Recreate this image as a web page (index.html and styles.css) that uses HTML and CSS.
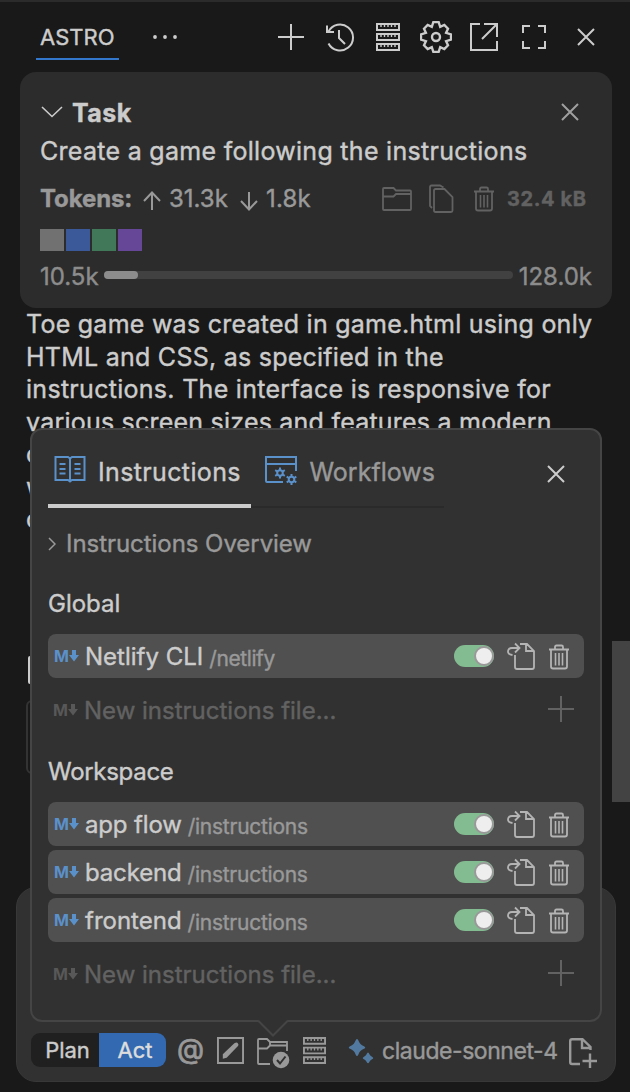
FILE: index.html
```html
<!DOCTYPE html>
<html lang="en">
<head>
<meta charset="utf-8">
<title>Astro</title>
<link rel="stylesheet" href="styles.css">
</head>
<body>
<svg class="sprite" aria-hidden="true">
  <symbol id="plus" viewBox="0 0 26 26"><path d="M13 0V26M0 13H26"/></symbol>
  <symbol id="close" viewBox="0 0 18 18"><path d="M1 1L17 17M17 1L1 17"/></symbol>
  <symbol id="server" viewBox="0 0 24 28"><path d="M1 1H23V7H1ZM1 11H23V17H1ZM1 21H23V27H1Z"/><path stroke-width="1.4" d="M5 1V4M8.500 1V4M12 1V4M15.500 1V4M19 1V4M5 11V14M8.500 11V14M12 11V14M15.500 11V14M19 11V14M5 21V24M8.500 21V24M12 21V24M15.500 21V24M19 21V24"/></symbol>
  <symbol id="trash" viewBox="0 0 22 26"><path stroke-width="1.800" d="M1 5.500H21M3 6V22.500Q3 24.500 5 24.500H17Q19 24.500 19 22.500V6M7 5.500V3Q7 1.500 8.500 1.500H13.500Q15 1.500 15 3V5.500"/><path stroke-width="1.600" d="M7.500 9V21.500M11 9V21.500M14.500 9V21.500"/></symbol>
  <symbol id="open-file" viewBox="0 0 28 28"><path stroke-width="1.800" d="M13 2H20L27 9V25Q27 27 25 27H10Q8 27 8 25V13M19 2V9H27M8 1.500L12.500 6L8 10.500M12 6H5Q1 6 1 9.500Q1 12.500 5.500 13"/></symbol>
  <symbol id="arrow" viewBox="0 0 10 12"><path class="solid" d="M3 0H7V5H10L5 11.500L0 5H3Z"/></symbol>
</svg>

<main class="panel">
  <header class="header">
    <div class="tab-title">ASTRO</div>
    <svg class="dots" viewBox="0 0 26 4"><circle cx="3" cy="2" r="1.900"/><circle cx="13" cy="2" r="1.900"/><circle cx="23" cy="2" r="1.900"/></svg>
    <nav class="actions">
      <svg class="icon i26"><use href="#plus"/></svg>
      <svg class="icon i32" viewBox="0 0 32 32"><path d="M4.500 22.500A13 13 0 1 0 4.500 10.500M3 4.500V11H10M15 9V17L21 23"/></svg>
      <svg class="icon server"><use href="#server"/></svg>
      <svg class="icon i32 gear" viewBox="-16 -16 32 32"><path d="M-2.600-15L2.600-15L4.200-10.100L8.300-12L12-8.300L10.100-4.200L15-2.600L15 2.600L10.100 4.200L12 8.300L8.300 12L4.200 10.100L2.600 15L-2.600 15L-4.200 10.100L-8.300 12L-12 8.300L-10.100 4.200L-15 2.600L-15-2.600L-10.100-4.200L-12-8.300L-8.300-12L-4.200-10.100Z"/><circle r="4"/></svg>
      <svg class="icon i28" viewBox="0 0 28 28"><path d="M10 1H1V27H27V18M14 1H27V14M27 1L12 16"/></svg>
      <svg class="icon full" viewBox="0 0 24 24"><path d="M1 8V1H8M16 1H23V8M23 16V23H16M8 23H1V16"/></svg>
      <svg class="icon i18"><use href="#close"/></svg>
    </nav>
  </header>

  <section class="task">
    <div class="task-head">
      <svg class="icon chev" viewBox="0 0 22 12"><path d="M1 1L11 10.500L21 1"/></svg>
      <h1 class="task-title">Task</h1>
      <svg class="icon i18 task-close"><use href="#close"/></svg>
    </div>
    <p class="task-text">Create a game following the instructions</p>
    <div class="tokens">
      <b class="tokens-label">Tokens:</b>
      <svg class="icon tok-arrow" viewBox="0 0 18 20"><path d="M9 19V2M1 10L9 1.500L17 10"/></svg>
      <span class="tok-up">31.3k</span>
      <svg class="icon tok-arrow down" viewBox="0 0 18 20"><path d="M9 1V18M1 10L9 18.500L17 10"/></svg>
      <span class="tok-down">1.8k</span>
      <div class="file-tools">
        <svg class="icon folder" viewBox="0 0 30 26"><path stroke-width="1.800" d="M2 2H11.500L14 4.500H28Q29 4.500 29 5.500V23Q29 24 28 24H2Q1 24 1 23V3Q1 2 2 2ZM1 10.500H11.500L14 8H29"/></svg>
        <svg class="icon copy" viewBox="0 0 26 30"><path stroke-width="1.800" d="M6 6.500Q6 5 7.500 5H16.500L24.500 13V26.500Q24.500 28 23 28H7.500Q6 28 6 26.500ZM4 24L2 22V3Q2 1.500 3.500 1.500H12L15.500 3.500"/></svg>
        <svg class="icon trash"><use href="#trash"/></svg>
        <b class="size">32.4 kB</b>
      </div>
    </div>
    <div class="swatches"><i class="sw gray"></i><i class="sw blue"></i><i class="sw green"></i><i class="sw violet"></i></div>
    <div class="usage">
      <span class="used">10.5k</span>
      <div class="bar"><div class="fill"></div></div>
      <span class="total">128.0k</span>
    </div>
  </section>

  <section class="chat">
    <p class="line l1">Toe game was created in game.html using only</p>
    <p class="line l2">HTML and CSS, as specified in the</p>
    <p class="line l3">instructions. The interface is responsive for</p>
    <p class="line l4">various screen sizes and features a modern</p>
    <p class="line">c</p>
    <p class="line">w</p>
    <p class="line">c</p>
    <div class="mark"></div>
    <div class="block"></div>
  </section>

  <footer class="composer">
    <div class="modes"><span class="plan">Plan</span><span class="act">Act</span></div>
    <span class="at">@</span>
    <svg class="icon edit" viewBox="0 0 28 28"><path d="M1 1H27V27H1Z"/><path class="solid" d="M6 18L18 6.500Q21.500 4.500 22 7.500V9L10 21.500L6 22.500Z"/></svg>
    <svg class="icon rules" viewBox="0 0 34 32"><path stroke-width="1.800" d="M14 27H3Q2 27 2 26V3Q2 2 3 2H11L14 5H31V14M2 11.500H11L14 8.500H31M14 5V8.500"/><circle class="solid" cx="25" cy="23" r="8.300"/><path class="tick" d="M21 23L24 26.500L29.500 19.500"/></svg>
    <svg class="icon server small"><use href="#server"/></svg>
    <svg class="sparkle" viewBox="0 0 26 26"><path d="M9 1Q10 1 10.400 2.500Q11.700 6.500 16 8.200Q18.500 9.500 16 10.800Q11.700 12.500 10.400 16.500Q9 19.500 7.600 16.500Q6.300 12.500 2 10.800Q-0.500 9.500 2 8.200Q6.300 6.500 7.600 2.500Q8 1 9 1ZM20 14.500Q20.900 14.500 21.300 16Q22 17.800 24 18.700Q26.500 20 24 21.300Q22 22.200 21.300 24Q20 26.500 18.700 24Q18 22.200 16 21.300Q13.500 20 16 18.700Q18 17.800 18.700 16Q19.100 14.500 20 14.500Z"/></svg>
    <span class="model">claude-sonnet-4</span>
    <svg class="icon add-file" viewBox="0 0 28 31"><path stroke-width="2.400" d="M11 26H3Q1.200 26 1.200 24V3Q1.200 1.200 3 1.200H13.500L21.500 9V12M13 1.500V10H22M21 15.500V30M13.500 23H28"/></svg>
  </footer>

  <div class="scrollbar"></div>

  <section class="popover">
    <div class="tabs">
      <div class="tab active">
        <svg class="icon book" viewBox="0 0 32 28"><path d="M16 3.500L14 2H1.500V25H14L16 26.500L18 25H30.500V2H18ZM16 3.500V26.500M5.500 9H11.500M5.500 14H11.500M5.500 18.500H11.500M20.500 9H26.500M20.500 14H26.500M20.500 18.500H26.500"/></svg>
        <span class="tab-a">Instructions</span>
      </div>
      <div class="tab">
        <svg class="icon flow" viewBox="0 0 33 30"><path d="M18 27H2Q1 27 1 26V2H31V16M1 9H31"/><circle cx="15" cy="18" r="2.800"/><path d="M15 12.500V15M15 21V23.500M10.200 15.200L12.300 16.500M17.700 19.500L19.800 20.800M10.200 20.800L12.300 19.500M17.700 16.500L19.800 15.200"/><circle cx="26.500" cy="24.500" r="2.800"/><path d="M26.500 19V21.500M26.500 27.500V30M21.700 21.700L23.800 23M29.200 26L31.300 27.300M21.700 27.300L23.800 26M29.200 23L31.300 21.700"/></svg>
        <span class="tab-b">Workflows</span>
      </div>
      <svg class="icon i18 pop-close"><use href="#close"/></svg>
    </div>
    <div class="overview"><svg class="icon chev-r" viewBox="0 0 8 14"><path d="M1 1L7 7L1 13"/></svg><span class="ov-text">Instructions Overview</span></div>

    <h2 class="group">Global</h2>
    <div class="row"><span class="md">M<svg><use href="#arrow"/></svg></span><span class="name n1">Netlify CLI</span><span class="path p1">/netlify</span><i class="toggle"></i><svg class="icon open"><use href="#open-file"/></svg><svg class="icon trash"><use href="#trash"/></svg></div>
    <div class="new"><span class="md">M<svg><use href="#arrow"/></svg></span><span class="new-text">New instructions file...</span><svg class="icon i26"><use href="#plus"/></svg></div>

    <h2 class="group second">Workspace</h2>
    <div class="row"><span class="md">M<svg><use href="#arrow"/></svg></span><span class="name n2">app flow</span><span class="path">/instructions</span><i class="toggle"></i><svg class="icon open"><use href="#open-file"/></svg><svg class="icon trash"><use href="#trash"/></svg></div>
    <div class="row"><span class="md">M<svg><use href="#arrow"/></svg></span><span class="name n3">backend</span><span class="path">/instructions</span><i class="toggle"></i><svg class="icon open"><use href="#open-file"/></svg><svg class="icon trash"><use href="#trash"/></svg></div>
    <div class="row"><span class="md">M<svg><use href="#arrow"/></svg></span><span class="name n4">frontend</span><span class="path">/instructions</span><i class="toggle"></i><svg class="icon open"><use href="#open-file"/></svg><svg class="icon trash"><use href="#trash"/></svg></div>
    <div class="new"><span class="md">M<svg><use href="#arrow"/></svg></span><span class="new-text">New instructions file...</span><svg class="icon i26"><use href="#plus"/></svg></div>
    <svg class="pointer" viewBox="0 0 32 18"><path class="cover" d="M1 0H31V2L16 17L1 2Z"/><path class="edge" d="M1 1.500L16 16.500L31 1.500"/></svg>
  </section>
</main>
</body>
</html>
```
FILE: styles.css
```css
*, *::after { box-sizing: border-box; }
body { margin: 0; background: #191919; color: #ccc; font-family: Inter, "Liberation Sans", sans-serif; font-size: 25px; -webkit-text-stroke: 0.4px currentColor; }
h1, h2, p { margin: 0; font-size: inherit; font-weight: 400; }
span, b, p, h1, h2 { white-space: nowrap; }
.sprite { position: absolute; width: 0; height: 0; }
.panel { position: relative; width: 630px; height: 1092px; overflow: hidden; display: flex; flex-direction: column; border-top: 2px solid #2b2b2b; }
.icon { fill: none; stroke: currentColor; stroke-width: 2; flex: none; display: block; }
.icon circle.solid, .solid { fill: currentColor; stroke: none; }
.i26 { width: 26px; height: 26px; }
.i32 { width: 32px; height: 32px; }
.i28 { width: 28px; height: 28px; }
.i18 { width: 18px; height: 18px; }
.server { width: 24px; height: 28px; }
.trash { width: 22px; height: 26px; }

.header { height: 70px; flex: none; display: flex; align-items: center; padding-left: 36px; }
.tab-title { align-self: flex-start; width: 83px; height: 58px; padding: 12px 4px 0; line-height: 46px; font-size: 22px; border-bottom: 2px solid #3377cc; }
.dots { width: 26px; height: 4px; margin-left: 33px; fill: currentColor; }
.actions { display: flex; align-items: center; margin-left: 100px; }
.actions .icon + .icon { margin-left: 20px; }
.actions .gear { stroke-width: 2.4; }
.actions .full.icon { width: 24px; height: 24px; margin-left: 24px; }
.actions .gear + .i28.icon { margin-left: 18px; }
.actions .full + .i18.icon { margin-left: 31px; }

.task { width: 592px; height: 236px; flex: none; margin-left: 20px; padding: 20px; border-radius: 16px; background: #2c2c2c; }
.task-head { height: 40px; display: flex; align-items: center; padding-left: 1px; }
.chev { width: 22px; height: 12px; stroke-width: 1.6; }
.task-title { margin-left: 9px; margin-top: 1px; font-weight: 700; letter-spacing: 0.5px; }
.task-close { margin-left: auto; margin-right: 13px; color: #a0a0a0; }
.task-text { line-height: 38px; letter-spacing: 0.29px; }
.tokens { height: 56px; display: flex; align-items: center; font-size: 24px; color: #999; padding-top: 1px; }
.tokens-label { width: 103px; letter-spacing: -0.1px; }
.tok-arrow { width: 18px; height: 20px; margin-top: 4px; }
.tok-up { margin-left: 8px; width: 71px; }
.tok-down { margin-left: 8px; letter-spacing: 0.2px; }
.file-tools { margin-left: auto; display: flex; align-items: center; color: #626262; margin-right: 6px; }
.folder { width: 30px; height: 26px; }
.copy { width: 26px; height: 30px; margin: 0 19px 0 16px; }
.size { margin-left: 12px; font-size: 20px; width: 79px; letter-spacing: 0.6px; }
.swatches { display: flex; gap: 2px; margin-top: 3px; }
.sw { width: 24px; height: 22px; }
.gray { background: #717171; }
.blue { background: #3b5998; }
.green { background: #41785a; }
.violet { background: #664697; }
.usage { height: 50px; display: flex; align-items: center; color: #8c8c8c; font-size: 24px; }
.used { width: 64px; }
.bar { width: 409px; height: 8px; border-radius: 4px; background: #414141; margin-top: -3px; }
.fill { width: 34px; height: 8px; border-radius: 4px; background: #8c8c8c; }
.total { margin-left: 6px; }

.chat { padding-left: 26px; }
.line { line-height: 32.5px; letter-spacing: 0.25px; }
.l3 { letter-spacing: 0.29px; }
.l4 { letter-spacing: 0.22px; }
.mark { width: 8px; height: 28px; margin-top: 120px; margin-left: 2px; border-radius: 2px; background: #ccc; }
.block { width: 500px; height: 74px; margin-top: 16px; border: 2px solid #333; border-radius: 6px; }

.composer { position: absolute; left: 16px; top: 885px; width: 600px; height: 195px; padding: 0 16px 14px 15px; border: 1px solid #383838; border-radius: 20px; background: #313131; display: flex; align-items: flex-end; color: #999; }
.composer > * { flex: none; }
.modes { display: flex; width: 135px; height: 34px; border-radius: 9px; overflow: hidden; font-size: 22px; line-height: 34px; color: #ccc; text-align: center; margin-left: -1px; }
.plan { width: 68px; padding-left: 5px; background: #202020; }
.act { width: 67px; padding-left: 5px; background: #3269b0; color: #ddd; }
.at { width: 27px; margin-left: 11px; font-size: 28px; line-height: 36px; -webkit-text-stroke: 0.8px currentColor; }
.edit { width: 27px; height: 27px; margin: 0 0 3px 13px; }
.rules { width: 34px; height: 32px; margin: 0 0 -2px 12px; }
.tick { stroke: #313131; }
.small { width: 23px; height: 27px; margin: 0 0 3px 13px; }
.sparkle { width: 26px; height: 26px; margin: 0 0 3px 22px; fill: #52799f; }
.model { width: 176px; margin-left: 8px; font-size: 23px; line-height: 31px; letter-spacing: -0.45px; }
.add-file { width: 28px; height: 31px; margin: 0 0 -2px 11px; }

.scrollbar { position: absolute; left: 612px; top: 639px; width: 18px; height: 161px; background: #434343; }

.popover { position: absolute; left: 30px; top: 426px; width: 572px; height: 594px; padding: 0 16px; border: 2px solid #454545; border-radius: 12px; background: #313131; }
.tabs { display: flex; height: 78px; }
.tab { display: flex; width: 193px; padding: 20px 0 0 14px; line-height: 44px; border-bottom: 2px solid #2a2a2a; color: #999; }
.tab.active { width: 203px; padding-left: 6px; border-bottom: 4px solid #ccc; color: #ccc; }
.tab > span { margin-left: 12px; }
.tab > .tab-a { letter-spacing: 0.36px; }
.tab > .tab-b { margin-left: 11.5px; }
.book, .flow { color: #5b91cb; margin-top: 5px; }
.book { width: 32px; height: 28px; }
.flow { width: 33px; height: 30px; }
.pop-close { margin: 35px 0 0 103px; }
.overview { height: 71px; display: flex; align-items: center; color: #999; font-size: 24px; letter-spacing: -0.05px; }
.chev-r { width: 8px; height: 14px; stroke-width: 1.5; margin-right: 10px; }
.group { height: 55px; line-height: 50px; font-size: 24px; }
.row { width: 536px; height: 44px; margin-bottom: 4px; border-radius: 8px; padding: 0 14px 0 6px; display: flex; align-items: center; background: #505050; }
.name { margin-left: 6px; font-size: 24px; margin-top: 1px; letter-spacing: -0.15px; }
.n1 { letter-spacing: 0; }
.n4 { letter-spacing: 0; }
.path { margin-left: 6px; font-size: 21px; color: #999; margin-top: 4px; letter-spacing: -0.25px; }
.p1 { letter-spacing: -0.4px; }
.md { display: flex; align-items: center; width: 25px; font: 700 16px/24px Inter, sans-serif; color: #5b91cb; -webkit-text-stroke: 0; }
.md svg { width: 10px; height: 12px; margin-left: auto; }
.toggle { width: 40px; height: 22px; margin-left: auto; border-radius: 11px; background: #83bc91; display: flex; justify-content: flex-end; }
.toggle::after { content: ""; width: 20px; height: 20px; margin: 1px 0; border: 2px solid #999; border-radius: 50%; background: #eee; }
.open { width: 28px; height: 28px; margin: 0 13px 0 13px; }
.row .icon { color: #b4b4b4; }
.row .trash { margin-top: 1px; }
.new { height: 57px; width: 536px; display: flex; align-items: center; padding: 0 10px 0 5px; color: #626262; }
.new .md { color: #585858; margin-top: -1px; }
.new-text { margin-left: 6px; font-size: 24px; margin-top: -1px; }
.new .icon { margin-left: auto; margin-top: -3px; }
.second { margin-top: 8px; letter-spacing: -0.3px; }
.pointer { position: absolute; left: 225px; bottom: -17px; width: 32px; height: 18px; fill: none; }
.cover { fill: #313131; }
.edge { stroke: #454545; stroke-width: 2; }
```
